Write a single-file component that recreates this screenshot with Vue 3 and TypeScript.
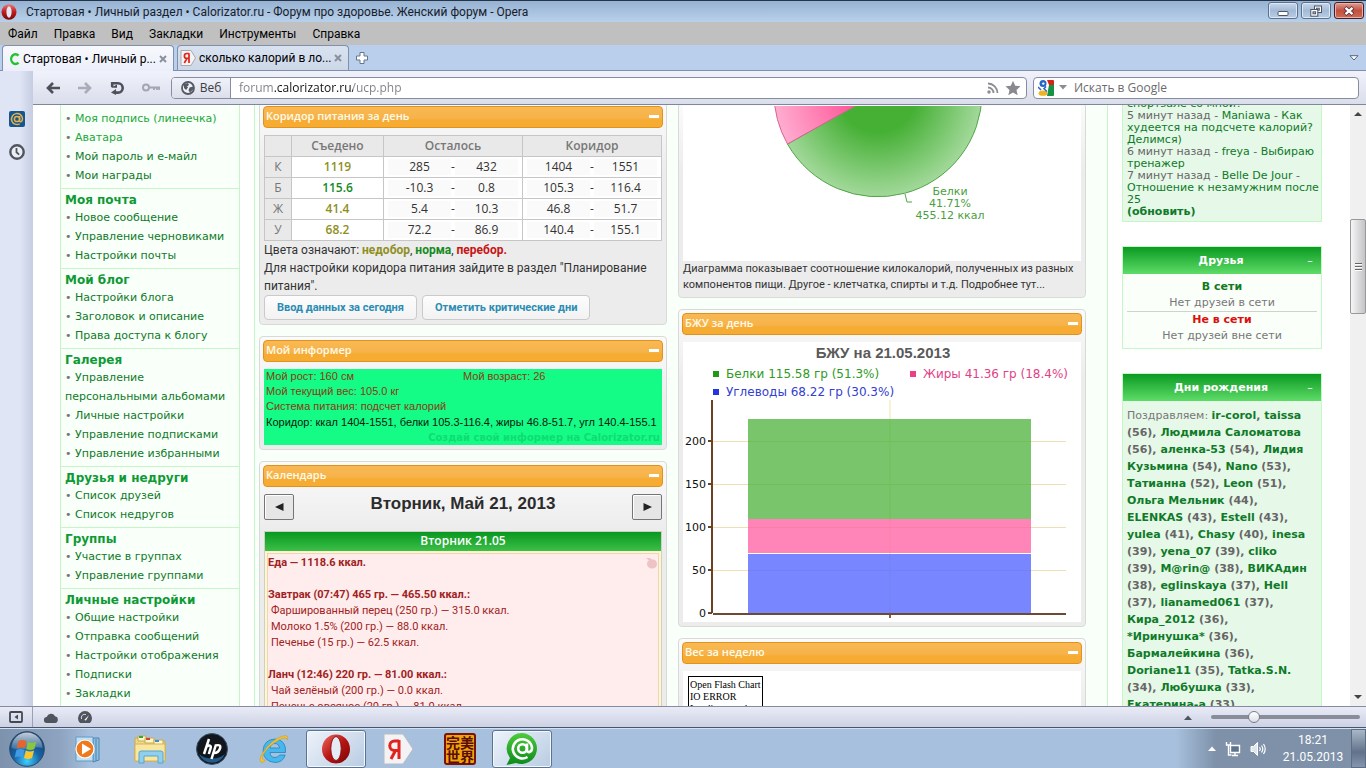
<script setup lang="ts">
import { ref } from 'vue'

interface MenuSection { title: string; items: string[] }
interface Seg { t: string; k: 'n' | 'g' }
interface FoodLine { text: string; head?: boolean }

const menuBar: string[] = ['Файл', 'Правка', 'Вид', 'Закладки', 'Инструменты', 'Справка']

const sections: MenuSection[] = [
  { title: '', items: ['Моя подпись (линеечка)', 'Аватара', 'Мой пароль и е-майл', 'Мои награды'] },
  { title: 'Моя почта', items: ['Новое сообщение', 'Управление черновиками', 'Настройки почты'] },
  { title: 'Мой блог', items: ['Настройки блога', 'Заголовок и описание', 'Права доступа к блогу'] },
  { title: 'Галерея', items: ['Управление персональными альбомами', 'Личные настройки', 'Управление подписками', 'Управление избранными'] },
  { title: 'Друзья и недруги', items: ['Список друзей', 'Список недругов'] },
  { title: 'Группы', items: ['Участие в группах', 'Управление группами'] },
  { title: 'Личные настройки', items: ['Общие настройки', 'Отправка сообщений', 'Настройки отображения', 'Подписки', 'Закладки'] },
]

const corridor = [
  { k: 'К', eaten: '1119', tone: 'low', left: ['285', '432'], range: ['1404', '1551'] },
  { k: 'Б', eaten: '115.6', tone: 'ok', left: ['-10.3', '0.8'], range: ['105.3', '116.4'] },
  { k: 'Ж', eaten: '41.4', tone: 'low', left: ['5.4', '10.3'], range: ['46.8', '51.7'] },
  { k: 'У', eaten: '68.2', tone: 'low', left: ['72.2', '86.9'], range: ['140.4', '155.1'] },
]

const food: FoodLine[] = [
  { text: 'Еда — 1118.6 ккал.', head: true },
  { text: '' },
  { text: 'Завтрак (07:47) 465 гр. — 465.50 ккал.:', head: true },
  { text: 'Фаршированный перец (250 гр.) — 315.0 ккал.' },
  { text: 'Молоко 1.5% (200 гр.) — 88.0 ккал.' },
  { text: 'Печенье (15 гр.) — 62.5 ккал.' },
  { text: '' },
  { text: 'Ланч (12:46) 220 гр. — 81.00 ккал.:', head: true },
  { text: 'Чай зелёный (200 гр.) — 0.0 ккал.' },
  { text: 'Печенье овсяное (20 гр.) — 81.0 ккал.' },
]

const ticks = [
  { v: 200, y: 100 }, { v: 150, y: 143 }, { v: 100, y: 186 }, { v: 50, y: 229 },
]

const n = (t: string): Seg => ({ t, k: 'n' })
const g = (t: string): Seg => ({ t, k: 'g' })
const birthdays: Seg[][] = [
  [n('ir-corol'), g(', '), n('taissa')],
  [g('(56), '), n('Людмила Саломатова')],
  [g('(56), '), n('аленка-53'), g(' (54), '), n('Лидия')],
  [n('Кузьмина'), g(' (54), '), n('Nano'), g(' (53),')],
  [n('Татианна'), g(' (52), '), n('Leon'), g(' (51),')],
  [n('Ольга Мельник'), g(' (44),')],
  [n('ELENKAS'), g(' (43), '), n('Estell'), g(' (43),')],
  [n('yulea'), g(' (41), '), n('Chasy'), g(' (40), '), n('inesa')],
  [g('(39), '), n('yena_07'), g(' (39), '), n('cliko')],
  [g('(39), '), n('M@rin@'), g(' (38), '), n('ВИКАдин')],
  [g('(38), '), n('eglinskaya'), g(' (37), '), n('Hell')],
  [g('(37), '), n('lianamed061'), g(' (37),')],
  [n('Кира_2012'), g(' (36),')],
  [n('*Иринушка*'), g(' (36),')],
  [n('Бармалейкина'), g(' (36),')],
  [n('Doriane11'), g(' (35), '), n('Tatka.S.N.')],
  [g('(34), '), n('Любушка'), g(' (33),')],
  [n('Екатерина-а'), g(' (33),')],
]

const url = ref('forum.calorizator.ru/ucp.php')
const query = ref('')
const zoom = ref(27)
</script>

<template>
  <div class="screen">
    <header class="titlebar">
      <svg class="tlogo" width="16" height="16" viewBox="0 0 16 16">
        <defs>
          <linearGradient id="opR" x1="0" y1="0" x2="0" y2="1">
            <stop offset="0" stop-color="#e87a7a" /><stop offset=".5" stop-color="#c11b1b" /><stop offset="1" stop-color="#7c0606" />
          </linearGradient>
        </defs>
        <ellipse cx="8" cy="8" rx="7.5" ry="7.8" fill="url(#opR)" />
        <ellipse cx="8" cy="8" rx="2.6" ry="5.8" fill="#dfe9f5" />
      </svg>
      <h1>Стартовая • Личный раздел • Calorizator.ru - Форум про здоровье. Женский форум - Opera</h1>
      <div class="winbtns">
        <button aria-label="Свернуть"><svg width="12" height="12" viewBox="0 0 12 12"><rect x="1" y="6.500" width="10" height="4" rx="1" fill="#fff" stroke="#4a5568" /></svg></button>
        <button aria-label="Восстановить">
          <svg width="12" height="12" viewBox="0 0 12 12" fill="#fff" stroke="#4a5568"><rect x="4.500" y="1" width="7" height="6.500" /><rect x="6.500" y="3.200" width="2.800" height="2" fill="#b5c7de" /><rect x=".8" y="4.500" width="7" height="6.700" /><rect x="3" y="6.800" width="2.600" height="2" fill="#b5c7de" /></svg>
        </button>
        <button class="close" aria-label="Закрыть"><svg width="12" height="12" viewBox="0 0 12 12"><path d="M2 2.500L10 9.500M10 2.500L2 9.500" stroke="#5a3038" stroke-width="4.200" /><path d="M2.500 2.800L9.500 9.200M9.500 2.800L2.500 9.200" stroke="#fff" stroke-width="2.400" /></svg></button>
      </div>
    </header>

    <nav class="menubar">
      <button v-for="m in menuBar" :key="m">{{ m }}</button>
    </nav>

    <div class="tabbar">
      <div class="tab active">
        <svg width="12" height="14" viewBox="0 0 12 14"><path d="M10.500 3.600A4.300 4.900 0 1 0 10.500 10.600" fill="none" stroke="#22c32e" stroke-width="2.400" /></svg>
        <span>Стартовая • Личный р...</span>
        <button aria-label="Закрыть вкладку"><svg width="8" height="8" viewBox="0 0 8 8"><path d="M1 1L7 7M7 1L1 7" stroke="#8b919c" stroke-width="2" /></svg></button>
      </div>
      <div class="tab">
        <svg width="16" height="16" viewBox="0 0 16 16"><path d="M1 .5h10l4.500 7.500-4.500 7.500H1z" fill="#f4f4f4" stroke="#a9a9ad" /><path d="M9 3.200V13M9 3.500H6.800a2.300 2.300 0 0 0 0 4.800H9M7 8.300L4.300 13" fill="none" stroke="#e0221c" stroke-width="1.700" /></svg>
        <span>сколько калорий в ло...</span>
        <button aria-label="Закрыть вкладку"><svg width="8" height="8" viewBox="0 0 8 8"><path d="M1 1L7 7M7 1L1 7" stroke="#8b919c" stroke-width="2" /></svg></button>
      </div>
      <button class="plus" aria-label="Новая вкладка"><svg width="14" height="14" viewBox="0 0 14 14"><path d="M5 1.500h4V5h3.500v4H9v3.500H5V9H1.500V5H5z" fill="#fff" stroke="#66758f" /></svg></button>
      <button class="tabmenu" aria-label="Список вкладок"><svg width="10" height="6" viewBox="0 0 10 6"><path d="M1 .7h8L5 5z" fill="#fff" stroke="#586480" /></svg></button>
    </div>

    <div class="middle">
      <aside class="rail">
        <button aria-label="Почта"><svg width="16" height="16" viewBox="0 0 16 16"><rect width="16" height="16" rx="2" fill="#15568f" /><path d="M10.600 5v4.600c0 2 2.900 1.600 2.900-1.800A5.500 5.500 0 1 0 10.700 12.800" fill="none" stroke="#e6b04a" stroke-width="1.500" /><circle cx="8" cy="8" r="2.600" fill="none" stroke="#e6b04a" stroke-width="1.500" /></svg></button>
        <button aria-label="История"><svg width="16" height="16" viewBox="0 0 16 16"><circle cx="8" cy="8" r="6.700" fill="#eceff7" stroke="#50555e" stroke-width="2.400" /><path d="M7.500 4v4.300l2.700 2.300" fill="none" stroke="#50555e" stroke-width="1.800" /></svg></button>
      </aside>

      <div class="view">
        <div class="toolbar">
          <div class="navbtns">
            <button aria-label="Назад"><svg width="14" height="12" viewBox="0 0 14 12"><path d="M14 6H3M7 1L2 6l5 5" fill="none" stroke="#4c5058" stroke-width="2.600" /></svg></button>
            <button aria-label="Вперёд"><svg width="14" height="12" viewBox="0 0 14 12"><path d="M0 6h11M7 1l5 5-5 5" fill="none" stroke="#a9adb8" stroke-width="2.600" /></svg></button>
            <button aria-label="Обновить"><svg width="14" height="14" viewBox="0 0 14 14"><path d="M2.200 6V2.200H8a4.700 4.700 0 0 1 0 9.400H5" fill="none" stroke="#4c5058" stroke-width="2.600" /><path d="M1 6.800h6V3.500M6 8L1 11.500 6 14z" fill="#4c5058" /></svg></button>
            <button aria-label="Пароли"><svg width="18" height="10" viewBox="0 0 18 10"><circle cx="4" cy="4.500" r="3" fill="none" stroke="#a2a6b1" stroke-width="2" /><path d="M7 4.500h11M12 5v2M15 5v2M17.200 5v2" stroke="#a2a6b1" stroke-width="1.800" /></svg></button>
          </div>
          <div class="address">
            <button class="web"><svg width="14" height="14" viewBox="0 0 14 14"><circle cx="7" cy="7" r="6" fill="#f0f1f6" stroke="#555a64" stroke-width="1.800" /><path d="M3 3l4-1 1 2-2 1.500 1 1L5 9 3 7zM8.500 6.500l3.500-1v3l-3 3-1.500-2z" fill="#555a64" /></svg>Веб</button>
            <input v-model="url" type="text" aria-label="Адрес">
            <svg width="12" height="12" viewBox="0 0 12 12"><circle cx="2" cy="10" r="1.700" fill="#8b8d93" /><path d="M1 5.500A5.500 5.500 0 0 1 6.500 11M1 1.500A9.500 9.500 0 0 1 10.500 11" fill="none" stroke="#8b8d93" stroke-width="1.800" /></svg>
            <svg width="16" height="16" viewBox="0 0 16 16"><path d="M8 .8l2.200 4.900 5.300.6-4 3.600 1.200 5.300L8 12.500l-4.700 2.700 1.200-5.300-4-3.600 5.300-.6z" fill="#888a90" /></svg>
          </div>
          <div class="search">
            <svg width="16" height="16" viewBox="0 0 16 16"><rect width="16" height="16" rx="1" fill="#fff" /><path d="M9 0h6a1 1 0 0 1 1 1v4h-5z" fill="#d8231c" /><path d="M11 5h5v10a1 1 0 0 1-1 1H9z" fill="#149245" /><circle cx="5" cy="3.500" r="3.500" fill="#2467c8" /><ellipse cx="5" cy="13.200" rx="4.300" ry="2.600" fill="#f0b41e" /><path d="M0 7l3 3M8 6.500l-2 2.300 3 2.700" stroke="#2467c8" stroke-width="1.500" fill="none" /><circle cx="5.300" cy="3.600" r="1.200" fill="#fff" /></svg>
            <svg width="8" height="5" viewBox="0 0 8 5"><path d="M0 0h8L4 4.500z" fill="#8a8d94" /></svg>
            <input v-model="query" type="text" placeholder="Искать в Google" aria-label="Искать в Google">
          </div>
        </div>

        <div class="pagewrap">
          <main class="page">
            <nav class="side">
              <section v-for="(s, i) in sections" :key="i">
                <h3 v-if="s.title">{{ s.title }}</h3>
                <ul>
                  <li v-for="(t, j) in s.items" :key="t"><a href="#" :class="{ lite: i === 0 && j < 2 }">{{ t }}</a></li>
                </ul>
              </section>
            </nav>

            <div class="center">
              <div class="col">
                <article class="portlet">
                  <header><h2>Коридор питания за день</h2><button aria-label="Свернуть блок"></button></header>
                  <div class="body">
                    <table class="corr">
                      <thead><tr><th></th><th>Съедено</th><th>Осталось</th><th>Коридор</th></tr></thead>
                      <tbody>
                        <tr v-for="r in corridor" :key="r.k">
                          <th>{{ r.k }}</th>
                          <td :class="r.tone">{{ r.eaten }}</td>
                          <td><div class="pair"><span>{{ r.left[0] }}</span><em>-</em><span>{{ r.left[1] }}</span></div></td>
                          <td><div class="pair"><span>{{ r.range[0] }}</span><em>-</em><span>{{ r.range[1] }}</span></div></td>
                        </tr>
                      </tbody>
                    </table>
                    <p class="legend">Цвета означают: <b class="low">недобор</b>, <b class="ok">норма</b>, <b class="over">перебор.</b><br>Для настройки коридора питания зайдите в раздел "Планирование<br>питания".</p>
                    <div class="acts"><button>Ввод данных за сегодня</button><button>Отметить критические дни</button></div>
                  </div>
                </article>

                <article class="portlet">
                  <header><h2>Мой информер</h2><button aria-label="Свернуть блок"></button></header>
                  <div class="body informer">
                    <p><span>Мой рост: 160 см</span><span>Мой возраст: 26</span></p>
                    <p>Мой текущий вес: 105.0 кг</p>
                    <p>Система питания: подсчет калорий</p>
                    <p class="blk">Коридор: ккал 1404-1551, белки 105.3-116.4, жиры 46.8-51.7, угл 140.4-155.1</p>
                    <p class="mark">Создай свой информер на Calorizator.ru</p>
                  </div>
                </article>

                <article class="portlet">
                  <header><h2>Календарь</h2><button aria-label="Свернуть блок"></button></header>
                  <div class="body">
                    <div class="calnav">
                      <button aria-label="Предыдущий день"><svg width="9" height="8" viewBox="0 0 9 8"><path d="M8.500 0v8L0 4z" fill="#222" /></svg></button>
                      <h2>Вторник, Май 21, 2013</h2>
                      <button aria-label="Следующий день"><svg width="9" height="8" viewBox="0 0 9 8"><path d="M.5 0v8L9 4z" fill="#222" /></svg></button>
                    </div>
                    <div class="day">
                      <h4>Вторник 21.05</h4>
                      <div class="dayin">
                        <div class="event">
                          <svg class="apple" width="11" height="12" viewBox="0 0 11 12"><path d="M0 1h4l2 1.500C9 2 11 4 11 7s-2.500 4.500-5 4.500S1 9.500 1 7s1-3 2-3.500z" fill="#eec3c6" /></svg>
                          <p v-for="(f, i) in food" :key="i" :class="{ head: f.head }">{{ f.text }}</p>
                        </div>
                      </div>
                    </div>
                  </div>
                </article>
              </div>

              <div class="col">
                <article class="portlet">
                  <div class="body pie">
                    <svg viewBox="0 0 398 155" role="img" aria-label="Белки 41.71%">
                      <defs>
                        <radialGradient id="gg" gradientUnits="userSpaceOnUse" cx="195" cy="-13" r="104">
                          <stop offset=".38" stop-color="#46b035" /><stop offset="1" stop-color="#a3d99b" />
                        </radialGradient>
                        <radialGradient id="pp" gradientUnits="userSpaceOnUse" cx="195" cy="-13" r="104">
                          <stop offset=".3" stop-color="#ff5a9c" /><stop offset="1" stop-color="#ffadd0" />
                        </radialGradient>
                      </defs>
                      <path d="M195 -13L104.500 38A104 104 0 0 0 299 -13z" fill="url(#gg)" stroke="#4fa545" />
                      <path d="M195 -13L104.500 38A104 104 0 0 1 91 -13z" fill="url(#pp)" stroke="#d9628f" />
                      <path d="M222 88l2 8h5" fill="none" stroke="#4fa545" />
                      <g class="pielab"><text x="267" y="89">Белки</text><text x="267" y="101">41.71%</text><text x="267" y="113">455.12 ккал</text></g>
                    </svg>
                    <p>Диаграмма показывает соотношение килокалорий, полученных из разных<br>компонентов пищи. Другое - клетчатка, спирты и т.д. Подробнее тут...</p>
                  </div>
                </article>

                <article class="portlet">
                  <header><h2>БЖУ за день</h2><button aria-label="Свернуть блок"></button></header>
                  <div class="body">
                    <svg class="bars" viewBox="0 0 398 280" role="img" aria-label="БЖУ на 21.05.2013">
                      <text class="ct" x="200" y="16">БЖУ на 21.05.2013</text>
                      <g class="lg">
                        <rect x="30" y="29" width="6" height="6" fill="#1f9a12" /><text x="43" y="36" fill="#2f9a24">Белки 115.58 гр (51.3%)</text>
                        <rect x="227" y="29" width="6" height="6" fill="#ee3e86" /><text x="240" y="36" fill="#e23f86">Жиры 41.36 гр (18.4%)</text>
                        <rect x="30" y="47" width="6" height="6" fill="#2436e4" /><text x="43" y="54" fill="#3340d0">Углеводы 68.22 гр (30.3%)</text>
                      </g>
                      <rect x="206" y="58" width="2" height="213" fill="#f7f1d6" />
                      <g v-for="t in ticks" :key="t.v">
                        <rect x="30" :y="t.y - 1" width="353" height="1" fill="#efe0b4" />
                      </g>
                      <rect x="65" y="77" width="283" height="100" fill="#4db33c" fill-opacity=".76" />
                      <rect x="65" y="177" width="283" height="34" fill="#ff63a4" fill-opacity=".78" />
                      <rect x="65" y="212" width="283" height="59" fill="#5a6bff" fill-opacity=".82" />
                      <g v-for="t in ticks" :key="t.v" class="tk">
                        <rect x="25" :y="t.y - 2" width="4" height="2" fill="#6b4226" /><text x="23" :y="t.y + 3">{{ t.v }}</text>
                      </g>
                      <g class="tk"><rect x="25" y="270" width="4" height="2" fill="#6b4226" /><text x="23" y="275">0</text></g>
                      <rect x="28" y="58" width="2" height="213" fill="#6b4226" />
                      <rect x="30" y="271" width="353" height="2" fill="#6b4a36" />
                      <rect x="206" y="273" width="2" height="3" fill="#8a6040" />
                    </svg>
                  </div>
                </article>

                <article class="portlet">
                  <header><h2>Вес за неделю</h2><button aria-label="Свернуть блок"></button></header>
                  <div class="body week">
                    <pre>Open Flash Chart
IO ERROR
Loading test data</pre>
                  </div>
                </article>
              </div>
            </div>

            <aside class="right">
              <section class="news">
                <p><a href="#">спортзале со мной?</a></p>
                <p>5 минут назад - <a href="#">Maniawa</a> - <a href="#">Как<br>худеется на подсчете калорий?<br>Делимся)</a></p>
                <p>6 минут назад - <a href="#">freya</a> - <a href="#">Выбираю<br>тренажер</a></p>
                <p>7 минут назад - <a href="#">Belle De Jour</a> - <br><a href="#">Отношение к незамужним после<br>25</a></p>
                <button>(обновить)</button>
              </section>
              <section class="box">
                <header><h3>Друзья</h3><button aria-label="Свернуть">–</button></header>
                <div class="friends">
                  <b class="on">В сети</b><p>Нет друзей в сети</p><hr><b class="off">Не в сети</b><p>Нет друзей вне сети</p>
                </div>
              </section>
              <section class="box">
                <header><h3>Дни рождения</h3><button aria-label="Свернуть">–</button></header>
                <div class="bday">
                  <p v-for="(l, i) in birthdays" :key="i"><span v-if="i === 0">Поздравляем: </span><template v-for="(s, j) in l" :key="j"><a v-if="s.k === 'n'" href="#">{{ s.t }}</a><b v-else>{{ s.t }}</b></template></p>
                </div>
              </section>
            </aside>
          </main>

          <div class="vscroll">
            <svg width="16" height="17" viewBox="0 0 16 17"><path d="M4 11l4-4 4 4z" fill="#444" /></svg>
            <div class="track"><div class="thumb"><i></i><i></i><i></i></div></div>
            <svg width="16" height="17" viewBox="0 0 16 17"><path d="M4 6l4 4 4-4z" fill="#444" /></svg>
          </div>
        </div>
      </div>
    </div>

    <footer class="status">
      <button class="panel" aria-label="Панель"><svg width="14" height="12" viewBox="0 0 14 12"><rect x="1" y="1" width="12" height="10" rx="1" fill="none" stroke="#454952" stroke-width="1.800" /><path d="M9 3.500v5L5.500 6z" fill="#454952" /></svg></button>
      <button class="cloud" aria-label="Облако"><svg width="14" height="11" viewBox="0 0 14 11"><path d="M3 11a3 3 0 0 1-.3-6A4.500 4.500 0 0 1 11 4.300 3.400 3.400 0 0 1 11 11z" fill="#50545d" /></svg></button>
      <button class="turbo" aria-label="Турбо"><svg width="14" height="12" viewBox="0 0 14 12"><path d="M2 12A7 7 0 1 1 12 12z" fill="#50545d" /><path d="M3.500 8A3.500 3.500 0 0 1 8 3.500" stroke="#d5d8e4" stroke-width="1" fill="none" /><path d="M6.300 9L11 4 8 9.500z" fill="#fff" /></svg></button>
      <span class="grow"></span>
      <button class="up" aria-label="Масштаб"><svg width="8" height="5" viewBox="0 0 8 5"><path d="M0 5l4-4.500L8 5z" fill="#50545d" /></svg></button>
      <input v-model="zoom" type="range" min="0" max="100" aria-label="Масштаб страницы">
    </footer>

    <footer class="taskbar">
      <button class="start" aria-label="Пуск">
        <svg width="36" height="36" viewBox="0 0 36 36">
          <defs>
            <radialGradient id="orb" cx=".5" cy=".85" r=".85"><stop offset="0" stop-color="#3fd0ff" /><stop offset=".45" stop-color="#1763a5" /><stop offset="1" stop-color="#123a66" /></radialGradient>
            <linearGradient id="orbh" x1="0" y1="0" x2="0" y2="1"><stop offset="0" stop-color="#fff" stop-opacity=".75" /><stop offset="1" stop-color="#fff" stop-opacity=".15" /></linearGradient>
          </defs>
          <circle cx="18" cy="18" r="17.300" fill="url(#orb)" stroke="#2c4a6b" />
          <path d="M2.500 17A15.500 15.500 0 0 1 33.500 17C24 14 12 21 2.500 17z" fill="url(#orbh)" />
          <path d="M9.500 10q4-2 8 0l-1.800 7.400q-4-2-8 0z" fill="#e8642a" /><path d="M19 10.700q4 2 8.300 0l-1.900 7.300q-4 2-8.200 0z" fill="#8cc63e" />
          <path d="M7.400 19q4-2 8 0l-1.800 7.400q-4-2-7.900 0z" fill="#3f9be6" /><path d="M16.800 19.600q4.200 2 8.200 0l-1.900 7.300q-4 2-8.100 0z" fill="#f9c62c" />
        </svg>
      </button>
      <button class="task" aria-label="Проигрыватель"><svg width="32" height="32" viewBox="0 0 32 32"><path d="M21 5h6v22l-6 2z" fill="#8fc0e2" stroke="#4c83ad" /><path d="M24 6v22" stroke="#4c83ad" /><path d="M4 4h17v24H4z" fill="#c3e0f2" stroke="#5e9ac4" /><circle cx="13" cy="16" r="9" fill="#ee7a1d" stroke="#fff" stroke-width="1.200" /><path d="M10 10.500l9 5.500-9 5.500z" fill="#fff" /></svg></button>
      <button class="task" aria-label="Проводник"><svg width="34" height="32" viewBox="0 0 34 32"><path d="M2 5h10l2 3h18v20H2z" fill="#f0d888" stroke="#c9a94c" /><path d="M5 3h8v5H5z" fill="#fff6cf" stroke="#c9a94c" /><rect x="6" y="3" width="4" height="2" fill="#3aa53a" /><path d="M12 5h9v5h-9z" fill="#fff6cf" stroke="#c9a94c" /><rect x="13" y="5" width="4" height="2" fill="#d44330" /><path d="M21 7h9v5h-9z" fill="#fff6cf" stroke="#c9a94c" /><rect x="22" y="7" width="4" height="2" fill="#3b8fd6" /><path d="M2 11h30v17H2z" fill="#f9e7a0" stroke="#d2b457" /><path d="M6 30V20q0-2 2-2h20q2 0 2 2v10h-5v-7H11v7z" fill="#8fd0ee" stroke="#5aa3cb" /></svg></button>
      <button class="task" aria-label="HP"><svg width="32" height="32" viewBox="0 0 32 32"><circle cx="16" cy="16" r="15.500" fill="#11161d" stroke="#3a5068" /><path d="M3 21a14 14 0 0 0 26 0C22 27 10 27 3 21z" fill="#245a8a" /><path d="M13 6L8 21M10.500 13.500q5.500-2.500 4 2L12.800 21M20 11.500L15.500 26M19.500 12.500q6-1.500 4.500 3T18 20" fill="none" stroke="#fff" stroke-width="2.500" /></svg></button>
      <button class="task" aria-label="Internet Explorer"><svg width="32" height="32" viewBox="0 0 32 32"><path d="M27.500 19.500H12q.4 5 5 5 3 0 4.500-2.500h5.700Q25 29.500 17 29.500 5.500 28.500 5 17.500 6 6.500 17 6q11.500 1 10.500 13.500zM12 15h9.500q-.6-4.500-4.700-4.500T12 15z" fill="#47b8ee" stroke="#2384bf" stroke-width=".8" /><path d="M5 29.500Q-1 29 5 19.500 13 7 25 3q6-1.500 4.500 4Q29 2.500 20 7.500 10 13 5 22q-2.500 5.500 2.500 5z" fill="#f4c531" stroke="#cf9b1c" stroke-width=".6" /></svg></button>
      <button class="task on" aria-label="Opera"><svg width="30" height="30" viewBox="0 0 30 30"><defs><linearGradient id="op2" x1="0" y1="0" x2="1" y2="1"><stop offset="0" stop-color="#f06a60" /><stop offset=".5" stop-color="#b81414" /><stop offset="1" stop-color="#7a0404" /></linearGradient></defs><ellipse cx="15" cy="15" rx="14" ry="14.500" fill="url(#op2)" /><ellipse cx="15" cy="14.500" rx="5.200" ry="12" fill="#e4ebf5" stroke="#8c1010" /></svg></button>
      <button class="task" aria-label="Яндекс"><svg width="32" height="32" viewBox="0 0 32 32"><path d="M2 1h19l10 15-10 15H2z" fill="#f3f3f5" stroke="#bcbcc2" /><path d="M17 7v19M17 8h-4.500a4.300 4.300 0 0 0 0 9.500H17M13.500 17.500L9 26" fill="none" stroke="#e2231c" stroke-width="3" /></svg></button>
      <button class="task" aria-label="Perfect World"><span class="han">完美<br>世界</span></button>
      <button class="task on" aria-label="Mail.Ru Агент"><svg width="34" height="34" viewBox="0 0 34 34"><defs><linearGradient id="ag" x1="0" y1="0" x2="0" y2="1"><stop offset="0" stop-color="#4fcb3c" /><stop offset="1" stop-color="#0b8a1c" /></linearGradient></defs><path d="M17 1a15.500 15.500 0 1 1-6 30L1.500 33 5 26A15.500 15.500 0 0 1 17 1z" fill="url(#ag)" /><circle cx="17.500" cy="16.500" r="4.300" fill="none" stroke="#fff" stroke-width="2.600" /><path d="M22 11.500v6.500c0 3.500 5 2.500 5-2A9.600 9.600 0 1 0 22.500 25" fill="none" stroke="#fff" stroke-width="2.600" /></svg></button>
      <span class="grow"></span>
      <div class="tray">
        <button aria-label="Скрытые значки"><svg width="8" height="5" viewBox="0 0 8 5"><path d="M0 5l4-4.500L8 5z" fill="#fff" /></svg></button>
        <button aria-label="Сеть"><svg width="16" height="16" viewBox="0 0 16 16"><path d="M5.500 4.500h9v7h-9z" fill="#5f748c" stroke="#fff" stroke-width="1.400" /><path d="M7 14.500h6M10 12v2M1.500 1v3h4V1M3.500 4v10h3" stroke="#fff" stroke-width="1.400" fill="none" /></svg></button>
        <button aria-label="Громкость"><svg width="16" height="16" viewBox="0 0 16 16"><path d="M1 5.500h2.500L7.500 1.500v13L3.500 10.500H1z" fill="#dfe6ee" stroke="#fff" /><path d="M9.500 6q1.500 2 0 4M11.500 4.500q2.600 3.500 0 7M13.500 3q3.400 5 0 10" fill="none" stroke="#fff" stroke-width="1.200" /></svg></button>
        <time>18:21<br>21.05.2013</time>
      </div>
      <button class="desk" aria-label="Свернуть все окна"></button>
    </footer>
  </div>
</template>

<style>
html, body { margin: 0; height: 100%; overflow: hidden; }
</style>

<style scoped>
.screen { height: 100vh; display: flex; flex-direction: column; overflow: hidden; font: 12px/16px Roboto, "Open Sans", sans-serif; color: #000; background: #fff; }
.screen * { box-sizing: border-box; }
button { border: 0; padding: 0; margin: 0; background: none; font: inherit; color: inherit; display: flex; align-items: center; justify-content: center; }
h1, h2, h3, h4, p, ul, pre { margin: 0; padding: 0; font-weight: inherit; font-size: inherit; }
a { color: #0f7a28; text-decoration: none; }
svg { display: block; flex: none; }
.grow { flex: 1; }

.titlebar { flex: none; height: 22px; display: flex; align-items: center; border-top: 1px solid #26344a; background: linear-gradient(#97b3d2, #b8d0ea); padding: 0 2px 0 1px; gap: 9px; }
.titlebar h1 { flex: 1; font-size: 12px; color: #16202c; white-space: nowrap; overflow: hidden; }
.winbtns { display: flex; gap: 3px; align-self: flex-start; padding-top: 1px; }
.winbtns button { width: 30px; height: 17px; border: 1px solid #5d718d; border-radius: 3px; background: linear-gradient(#c9d8ea, #a3bad6 50%, #b9cde4); box-shadow: inset 0 0 0 1px #dce8f5; }
.winbtns .close { border-color: #4a1c24; background: linear-gradient(#dca096, #c2503f 50%, #cf6b55); box-shadow: inset 0 0 0 1px #e5b3aa; }

.menubar { flex: none; height: 23px; background: #c0c0c0; display: flex; align-items: center; gap: 16px; padding: 0 8px; font-size: 12px; }

.tabbar { flex: none; height: 26px; background: #b9cfeb; border-bottom: 1px solid #7f8fac; display: flex; padding: 0 7px 0 2px; gap: 3px; }
.tab { height: 25px; width: 172px; flex: none; display: flex; align-items: center; gap: 3px; padding: 0 6px 0 2px; border: 1px solid #7f8fac; border-bottom: 0; border-radius: 4px 4px 0 0; background: linear-gradient(#d9e2f0, #ccd7e8); }
.tab.active { height: 26px; background: linear-gradient(#f8f9fd, #eceffa); padding-left: 5px; }
.tab span { flex: 1; min-width: 0; white-space: nowrap; }
.plus { width: 20px; }
.tabmenu { margin-left: auto; width: 10px; }

.middle { flex: 1; min-height: 0; display: flex; }
.rail { width: 33px; flex: none; background: linear-gradient(90deg, #dfe5f5 60%, #c6cde2); display: flex; flex-direction: column; gap: 17px; align-items: center; padding-top: 40px; }
.view { flex: 1; min-width: 0; display: flex; flex-direction: column; }
.toolbar { flex: none; height: 34px; background: linear-gradient(#f0f2fb, #dadeeb); border-bottom: 1px solid #81879b; display: flex; align-items: center; padding: 0 7px 0 13px; gap: 6px; font-family: "Open Sans", sans-serif; }
.navbtns { display: flex; width: 119px; gap: 18px; }
.address, .search { height: 22px; border: 1px solid #868ca2; border-radius: 4px; background: #fff; display: flex; align-items: center; overflow: hidden; }
.address { flex: 849; padding-right: 5px; gap: 6px; }
.search { flex: 320; gap: 5px; padding-left: 4px; }
.web { align-self: stretch; width: 59px; gap: 5px; background: linear-gradient(#f0f2fa, #dcdfea); border-right: 1px solid #868ca2; color: #3a3d44; }
input[type="text"] { flex: 1; min-width: 0; border: 0; outline: 0; padding: 0; font: inherit; background: none; height: 20px; }
.address input { padding-left: 2px; background: linear-gradient(90deg, #7c7f86 37px, #101010 37px, #101010 116px, #7c7f86 116px); -webkit-background-clip: text; background-clip: text; -webkit-text-fill-color: transparent; }
.search input { padding-left: 2px; }
.search input::placeholder { color: #6a6a6e; opacity: 1; }

.pagewrap { flex: 1; min-height: 0; display: flex; overflow: hidden; }
.page { flex: 1; min-width: 0; display: flex; gap: 14px; padding: 0 28px 0 27px; overflow: hidden; background: #fff; }
.side { width: 180px; flex: none; border: 1px solid #c6f6c6; border-width: 0 1px; background: #f9fff9; font: 11px/19px "DejaVu Sans", sans-serif; color: #777; }
.side section { border-top: 1px solid #c6f6c6; padding: 4px 0 3px 4px; }
.side section:first-child { border-top: 0; }
.side h3 { font: bold 12px/15px "DejaVu Sans", sans-serif; color: #0d9a35; }
.side ul { list-style: none; }
.side li::before { content: "• "; }
.side a.lite { color: #21a83a; }

.center { flex: 1; min-width: 0; border: 1px solid #c6f6c6; border-width: 0 1px; background: #f9fff9; display: flex; gap: 11px; padding: 0 21px 0 4px; }
.col { flex: 1; min-width: 0; display: flex; flex-direction: column; gap: 11px; margin-top: -3px; }
.portlet { flex: none; border: 1px solid #d8dad8; border-radius: 4px; padding: 3px 3px 4px; background: linear-gradient(#fbfbfb, #ececec 70px); font: 11px/18px "Open Sans", sans-serif; color: #333; }
.portlet > header { height: 22px; border: 1px solid #e0921a; border-radius: 4px; background: linear-gradient(#f8b853, #f7b34a 55%, #f6ac33 65%); display: flex; justify-content: space-between; padding: 0 3px 0 2px; color: #fffbe8; }
.portlet > header h2 { font-weight: 600; font-size: 11px; line-height: 17px; }
.portlet > header button { width: 10px; height: 3px; background: #fff; margin-top: 8px; }
.body { margin: 7px 1px 0; }

.corr { width: 100%; border-collapse: collapse; table-layout: fixed; background: #fff; font-size: 12px; line-height: 16px; }
.corr th, .corr td { border: 1px solid #c6c6c6; height: 21px; padding: 0; text-align: center; }
.corr th { background: #e9e9e9; color: #777; font-weight: 600; }
.corr tbody th { font-weight: normal; }
.corr th:first-child { width: 27px; }
.corr th:nth-child(2) { width: 92px; }
.corr td { font-weight: normal; }
.low { color: #8f8f1f; }
.ok { color: #158a1e; }
.over { color: #c81414; }
.corr td.low, .corr td.ok { font-weight: 600; }
.pair { display: grid; grid-template-columns: 1fr 4px 1fr; padding: 0 4px; }
.pair span { background: #fafafa; }
.pair em { font-style: normal; }
.legend { white-space: nowrap; font: 12px/18px Roboto, sans-serif; }
.legend b { font-weight: bold; }
.acts { display: flex; gap: 5px; }
.acts button { height: 25px; padding: 0 12px; border: 1px solid #cacaca; border-radius: 4px; background: linear-gradient(#fdfdfd, #f2f2f2); color: #2b8cb4; font: bold 11px/16px Roboto, sans-serif; white-space: nowrap; }

.informer { min-height: 76px; display: grid; grid-auto-rows: 1fr; background: #14fc86; font: 11px/15px "Liberation Sans", sans-serif; color: #8a3a10; padding: 0 2px; white-space: nowrap; }
.informer p { display: flex; }
.informer p span { width: 50%; }
.informer .blk { color: #04210f; }
.informer .mark { justify-content: flex-end; color: #0fdc70; font: bold 10px/15px "DejaVu Sans", sans-serif; }

.calnav { display: flex; justify-content: space-between; align-items: flex-start; }
.calnav button { width: 30px; height: 26px; border: 1px solid #757575; border-radius: 2px; background: #e6e6e6; box-shadow: inset 1px 1px 0 #fff; }
.calnav h2 { font: bold 17px/20px "Liberation Sans", sans-serif; color: #2c2c2c; }
.day { margin-top: 11px; border: 1px solid #cfd0c4; background: #fdf6cf; }
.day h4 { height: 19px; background: linear-gradient(#08981f, #3cbf48); color: #fff; font: 600 12px/18px "Open Sans", sans-serif; text-align: center; }
.dayin { padding: 2px 2px 0; }
.event { position: relative; border: 1px solid #efd5b8; background: #ffeded; color: #a02222; font: 11px/16px Roboto, sans-serif; padding-top: 1px; }
.event p { height: 16px; padding-left: 3px; white-space: nowrap; }
.event p.head { padding-left: 0; font-weight: bold; }
.apple { position: absolute; right: 1px; top: 3px; }

.pie { margin-top: 0; }
.pie svg, .bars { width: 100%; height: auto; background: #fff; }
.pie p { font: 11px/16px Roboto, sans-serif; white-space: nowrap; }
.pielab { font: 11px "DejaVu Sans", sans-serif; fill: #4a9f3e; text-anchor: middle; }
.ct { font: bold 15px "Liberation Sans", sans-serif; fill: #5a5a5a; text-anchor: middle; }
.lg { font: 12px "DejaVu Sans", sans-serif; }
.tk { font: 11px "DejaVu Sans", sans-serif; text-anchor: end; fill: #111; }
.week { background: #fff; min-height: 120px; padding: 5px; }
.week pre { width: fit-content; min-height: 90px; border: 1px solid #000; padding: 2px 1px; font: 10px/12px "Liberation Serif", serif; color: #000; background: #fff; }

.right { width: 200px; flex: none; display: flex; flex-direction: column; gap: 24px; margin-top: -8px; font: 11px/16px "DejaVu Sans", sans-serif; color: #777; }
.right section { flex: none; border: 1px solid #c6f6c6; white-space: nowrap; }
.right .news { background: #e6f8e8; border-top: 0; padding: 1px 4px 3px; line-height: 12px; color: #666; }
.news button { font-weight: bold; line-height: 12px; color: #0f7a28; }
.box header { height: 27px; display: flex; align-items: center; background: linear-gradient(#0a9a22, #5edc68); color: #fff; padding: 0 8px 0 12px; }
.box h3 { flex: 1; text-align: center; font-weight: bold; }
.box header button { width: 6px; }
.friends { background: #fafffa; padding: 5px 4px 4px; text-align: center; }
.friends b { display: block; line-height: 16px; }
.friends hr { margin: 0; border: 0; border-top: 1px solid #ccd4cc; }
.on { color: #0f7a20; }
.off { color: #dc1010; }
.bday { background: #e6f8e8; padding: 6px 4px; line-height: 17px; }
.bday a, .bday b { font-weight: bold; white-space: pre; }
.bday b { color: #666; }
.bday span { white-space: pre; }

.vscroll { width: 16px; flex: none; background: #f0f0f1; display: flex; flex-direction: column; }
.track { flex: 1; display: flex; flex-direction: column; padding-top: 97px; }
.thumb { height: 95px; border: 1px solid #989898; border-radius: 2px; background: linear-gradient(90deg, #f6f6f6, #dcdcde 50%, #c4c4c8); display: flex; flex-direction: column; align-items: center; justify-content: center; gap: 1px; }
.thumb i { width: 7px; height: 2px; background: #666; border-bottom: 1px solid #fff; }

.status { flex: none; height: 22px; background: linear-gradient(#e9ebf6, #cdd2e4); border-top: 1px solid #858ba0; border-bottom: 1px solid #47566c; display: flex; align-items: center; padding-right: 6px; }
.panel { width: 33px; align-self: stretch; border-right: 1px solid #9ba1b5; }
.cloud { width: 36px; }
.turbo { width: 32px; }
.up { margin-right: 19px; }
.status input { width: 149px; height: 16px; margin: 0; appearance: none; background: none; }
.status input::-webkit-slider-runnable-track { height: 4px; border-radius: 2px; background: #888d99; }
.status input::-webkit-slider-thumb { appearance: none; width: 12px; height: 12px; margin-top: -4px; border-radius: 50%; border: 1px solid #777c88; background: linear-gradient(#fff, #dcdfe8); }

.taskbar { flex: none; height: 40px; display: flex; align-items: center; background: linear-gradient(90deg, #7c92ad 0, #8da3bf 60px, #a7c0dd 90px, #a7c0dd calc(100% - 190px), #7e91a9 calc(100% - 150px)); border-top: 1px solid #d3e0ef; }
.start { width: 54px; margin-right: 4px; }
.task { width: 60px; height: 38px; margin-right: 2px; border-radius: 3px; }
.task.on { border: 1px solid #5c7390; background: linear-gradient(135deg, #edf3fa, #b9cce3); box-shadow: inset 0 0 0 1px #f3f8fd; }
.han { width: 32px; height: 32px; border: 2px solid #7a1208; border-radius: 3px; background: #f0a30c; font: bold 14px/14px "Noto Sans CJK SC", sans-serif; color: #5a0d05; }
.tray { display: flex; align-items: center; gap: 9px; color: #fff; }
.tray time { width: 76px; text-align: center; line-height: 17px; font-size: 12px; }
.desk { width: 15px; align-self: stretch; border: 1px solid #5d6d82; background: linear-gradient(#a9b7c8, #61728a 60%, #8496ad); }
</style>
